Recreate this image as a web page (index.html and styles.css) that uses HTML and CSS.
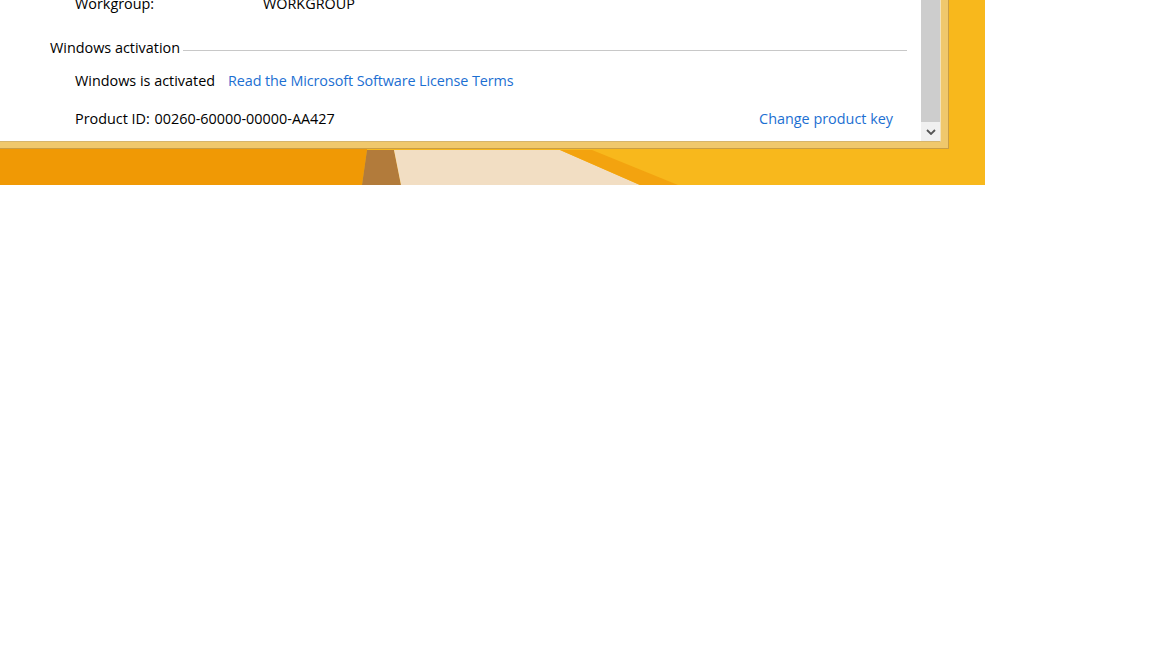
FILE: index.html
```html
<!DOCTYPE html>
<html lang="en">
<head>
<meta charset="utf-8">
<title>System - Windows activation</title>
<link rel="stylesheet" href="styles.css">
</head>
<body>
<div class="desktop">
  <svg class="wallpaper" width="985" height="185" viewBox="0 0 985 185" aria-hidden="true">
    <rect x="0" y="0" width="985" height="185" fill="#f8b81c"/>
    <polygon points="0,0 372,0 367,150 362,185 0,185" fill="#f09905"/>
    <polygon points="367,150 394,150 401,185 362,185" fill="#b27b3b"/>
    <polygon points="394,150 560,150 640,185 401,185" fill="#f2dec3"/>
    <polygon points="560,150 592,150 678,185 640,185" fill="#f3a30f"/>
  </svg>
  <div class="window">
    <div class="client">
      <div class="content">
        <div class="row row-top">
          <span class="label">Workgroup:</span>
          <span class="value">WORKGROUP</span>
        </div>
        <div class="section-head">
          <span class="section-title">Windows activation</span>
          <span class="rule"></span>
        </div>
        <div class="row row-activated">
          <span class="status">Windows is activated</span>
          <a class="link link-terms" href="#">Read the Microsoft Software License Terms</a>
        </div>
        <div class="row row-product">
          <span class="product"><span class="product-label">Product ID:</span> 00260-60000-00000-AA427</span>
          <a class="link" href="#">Change product key</a>
        </div>
      </div>
      <div class="scrollbar">
        <div class="thumb"></div>
        <div class="arrow">
          <svg width="10" height="6" viewBox="0 0 10 6"><polyline points="1,1 5,5 9,1" fill="none" stroke="#555555" stroke-width="1.8"/></svg>
        </div>
      </div>
    </div>
  </div>
</div>
</body>
</html>
```

FILE: styles.css
```css
html, body {
  margin: 0;
  padding: 0;
  background: #ffffff;
}

body {
  font-family: "Open Sans", "Noto Sans", "Liberation Sans", sans-serif;
  font-size: 14.4px;
  color: #000000;
}

.desktop {
  position: relative;
  width: 985px;
  height: 185px;
  overflow: hidden;
}

.wallpaper {
  position: absolute;
  left: 0;
  top: 0;
  display: block;
}

.window {
  position: relative;
  width: 949px;
  height: 149px;
  box-sizing: border-box;
  background: #f0c86c;
  border-right: 1px solid #c99d45;
  border-bottom: 1px solid #c99d45;
  padding: 0 7px 6px 0;
}

.client {
  display: flex;
  height: 142px;
  box-sizing: border-box;
  border-right: 1px solid #f4e2b8;
  border-bottom: 1px solid #d7b56a;
  background: #ffffff;
}

.content {
  flex: 1;
  overflow: hidden;
  padding: 0 14px 0 50px;
  line-height: 20px;
}

.row {
  display: flex;
  height: 20px;
  padding-left: 25px;
}

.row-top {
  margin-top: -6px;
}

.label {
  width: 188px;
}

.section-head {
  display: flex;
  align-items: center;
  gap: 3px;
  height: 20px;
  margin-top: 24px;
}

.rule {
  flex: 1;
  height: 1px;
  background: #c8c8c8;
  margin-top: 4px;
}

.row-activated {
  margin-top: 13px;
  gap: 13px;
}

.row-product {
  margin-top: 18px;
  justify-content: space-between;
  padding-right: 14px;
}

.product-label {
  margin-right: 1px;
}

.link {
  color: #1c6fd2;
  text-decoration: none;
}

.link-terms {
  letter-spacing: -0.1px;
}

.scrollbar {
  width: 19px;
  display: flex;
  flex-direction: column;
}

.thumb {
  flex: 1;
  background: #cdcdcd;
}

.arrow {
  height: 19px;
  background: #f0f0f0;
  display: flex;
  align-items: center;
  justify-content: center;
}

.arrow svg {
  display: block;
}
```
